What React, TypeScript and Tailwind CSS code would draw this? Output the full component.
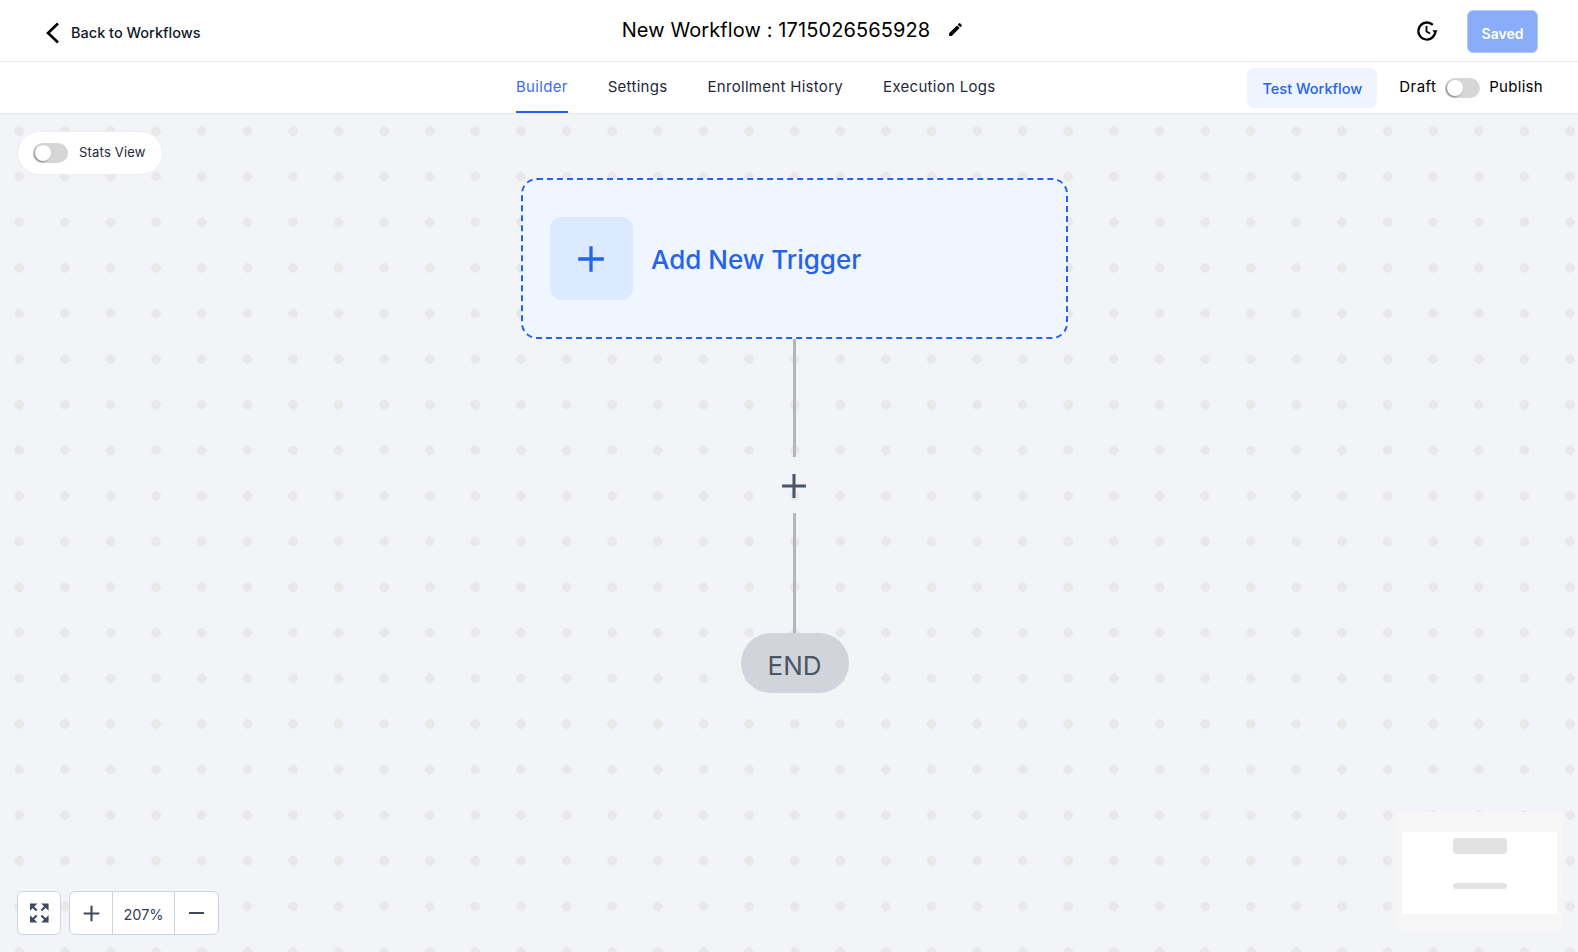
import { MdEdit } from "react-icons/md";

const Toggle = () => (
  <div className="relative h-5 w-[35px] rounded-full bg-[#d6d6d6]">
    <div className="absolute left-0.5 top-0.5 size-4 rounded-full bg-white shadow-[-1px_1px_2px_rgba(0,0,0,0.4)]" />
  </div>
);

const Plus = ({ size, className, width = 2 }: { size: number; className: string; width?: number }) => (
  <svg width={size} height={size} viewBox="0 0 24 24" fill="none" stroke="currentColor" strokeWidth={width} className={className}>
    <path d="M12 1v22M1 12h22" />
  </svg>
);

const HistoryIcon = () => (
  <svg width="22" height="22" viewBox="0 0 22 22" fill="none" stroke="#000" strokeWidth="2.3">
    <path d="M19.4 11a8.5 8.5 0 1 1-2.6-6.1" />
    <path d="M10.5 6v5.5l3.6 2" strokeWidth="1.8" />
    <path d="M16.4 10.2h5.2l-2.6 3.6z" fill="#000" stroke="none" />
  </svg>
);

const FitIcon = () => (
  <svg width="24" height="24" viewBox="0 0 20 20" fill="none" stroke="#3f4a5f" strokeWidth="1.8">
    <path d="M3 7V2.5h4.5z" fill="#3f4a5f" strokeWidth="1" />
    <path d="M13 2.5h4.5V7z" fill="#3f4a5f" strokeWidth="1" />
    <path d="M3 13v4.5h4.5z" fill="#3f4a5f" strokeWidth="1" />
    <path d="M17.5 13v4.5H13z" fill="#3f4a5f" strokeWidth="1" />
    <path d="M4 4l4 4M16 4l-4 4M4 16l4-4M16 16l-4-4" />
  </svg>
);

const tabs = ["Builder", "Settings", "Enrollment History", "Execution Logs"];

export default function App() {
  return (
    <div className="flex h-[952px] w-[1578px] flex-col overflow-hidden bg-white font-['Inter',sans-serif] text-[#111827]">
      <header className="grid h-[62px] shrink-0 grid-cols-[1fr_auto_1fr] items-center border-b border-[#e8e9ec]">
        <div className="flex items-center gap-[11px] pl-[45px] pt-1">
          <svg width="15" height="22" viewBox="0 0 15 22" fill="none" stroke="#000" strokeWidth="2.6">
            <path d="M13 1.5 3 11l10 9.5" />
          </svg>
          <span className="text-[14.5px] font-medium">Back to Workflows</span>
        </div>
        <div className="-mt-0.5 flex items-center gap-[17px] pl-2">
          <span className="text-xl tracking-[0.1px] text-black">New Workflow : 1715026565928</span>
          <MdEdit size={17} className="text-black" />
        </div>
        <div className="flex items-center justify-end gap-[29px] pr-10">
          <HistoryIcon />
          <button className="mt-0.5 h-[43px] w-[71px] rounded-md border border-[#b4cafb] bg-[#8aadf9] pt-1 text-sm font-semibold text-white">
            Saved
          </button>
        </div>
      </header>

      <nav className="flex h-[52px] shrink-0 items-stretch border-b border-[#e8e9ec] pl-[516px] pr-[35px]">
        <div className="flex gap-10">
          {tabs.map((tab, i) => (
            <div
              key={tab}
              className={
                i === 0
                  ? "flex items-center border-b-2 border-[#2563eb] pt-0.5 text-[15px] tracking-[0.3px] text-[#3b6cf6]"
                  : "flex items-center text-[15px] tracking-[0.3px] text-[#1f2937]"
              }
            >
              {tab}
            </div>
          ))}
        </div>
        <div className="ml-auto flex items-center">
          <button className="mr-[22px] h-10 w-[130px] rounded-lg bg-[#eff4ff] pt-[3px] text-[14.5px] font-medium text-[#2563eb]">
            Test Workflow
          </button>
          <span className="text-[15px] tracking-[0.4px] text-black">Draft</span>
          <div className="ml-[9px] mr-[9px]">
            <Toggle />
          </div>
          <span className="text-[15px] tracking-[0.3px] text-black">Publish</span>
        </div>
      </nav>

      <main className="relative flex-1 bg-[#f2f4f8] bg-[radial-gradient(circle,#e8e8e8_4.5px,transparent_5px)] bg-[length:45.62px_45.62px] bg-[position:-3.5px_-5.8px]">
        <div className="absolute left-[17px] top-[17px] flex h-11 w-[146px] items-center gap-[11px] rounded-full border border-[#eceef2] bg-white pl-[15px]">
          <Toggle />
          <span className="text-[13px] tracking-[0.2px] text-[#1f2937]">Stats View</span>
        </div>

        {/* diagram */}
        <div className="absolute left-[521px] top-[64px] flex w-[547px] flex-col items-center">
          <div className="flex h-[161px] w-full items-center gap-[18px] rounded-2xl border-2 border-dashed border-[#2563eb] bg-[#eff6ff] pl-[27px]">
            <div className="flex size-[83px] items-center justify-center rounded-xl bg-[#dbeafe]">
              <Plus size={28} width={2.8} className="mr-0.5 text-[#2563eb]" />
            </div>
            <span className="mt-0.5 text-[26px] font-medium text-[#2563eb]">Add New Trigger</span>
          </div>
          <div className="h-[118px] w-[3px] bg-[#b5b6bb]" />
          <div className="flex h-[56px] items-center justify-center pt-0.5">
            <Plus size={26} width={2.8} className="mr-0.5 text-[#475569]" />
          </div>
          <div className="h-[120px] w-[3px] bg-[#b5b6bb]" />
          <div className="flex h-[60px] w-[108px] items-center justify-center rounded-full bg-[#d1d5db] pt-1 text-[26px] text-[#4b5563]">
            END
          </div>
        </div>

        {/* zoom controls */}
        <div className="absolute bottom-[17px] left-[17px] flex gap-2 text-[#374151]">
          <button className="flex size-11 items-center justify-center rounded-md border border-[#cbd5e1] bg-white">
            <FitIcon />
          </button>
          <div className="flex h-11 w-[150px] items-center divide-x divide-[#cbd5e1] rounded-md border border-[#cbd5e1] bg-white">
            <div className="flex h-full w-[43px] items-center justify-center">
              <Plus size={17} width={3} className="text-[#3f4a5f]" />
            </div>
            <div className="flex h-full w-[62px] items-center justify-center pt-1 text-[14.5px] text-[#374151]">207%</div>
            <div className="flex h-full flex-1 items-center justify-center">
              <div className="h-0.5 w-[15px] bg-[#3f4a5f]" />
            </div>
          </div>
        </div>

        {/* minimap */}
        <div className="absolute left-[1397px] top-[698px] h-[118px] w-[165px] bg-[#f6f6f6]">
          <div className="absolute left-[5px] top-5 h-[82px] w-[155px] bg-white">
            <div className="absolute left-[51px] top-1.5 h-4 w-[54px] rounded-sm bg-[#e2e2e2]" />
            <div className="absolute left-[51px] top-[51px] h-1.5 w-[54px] rounded-sm bg-[#e2e2e2]" />
          </div>
        </div>
      </main>
    </div>
  );
}
